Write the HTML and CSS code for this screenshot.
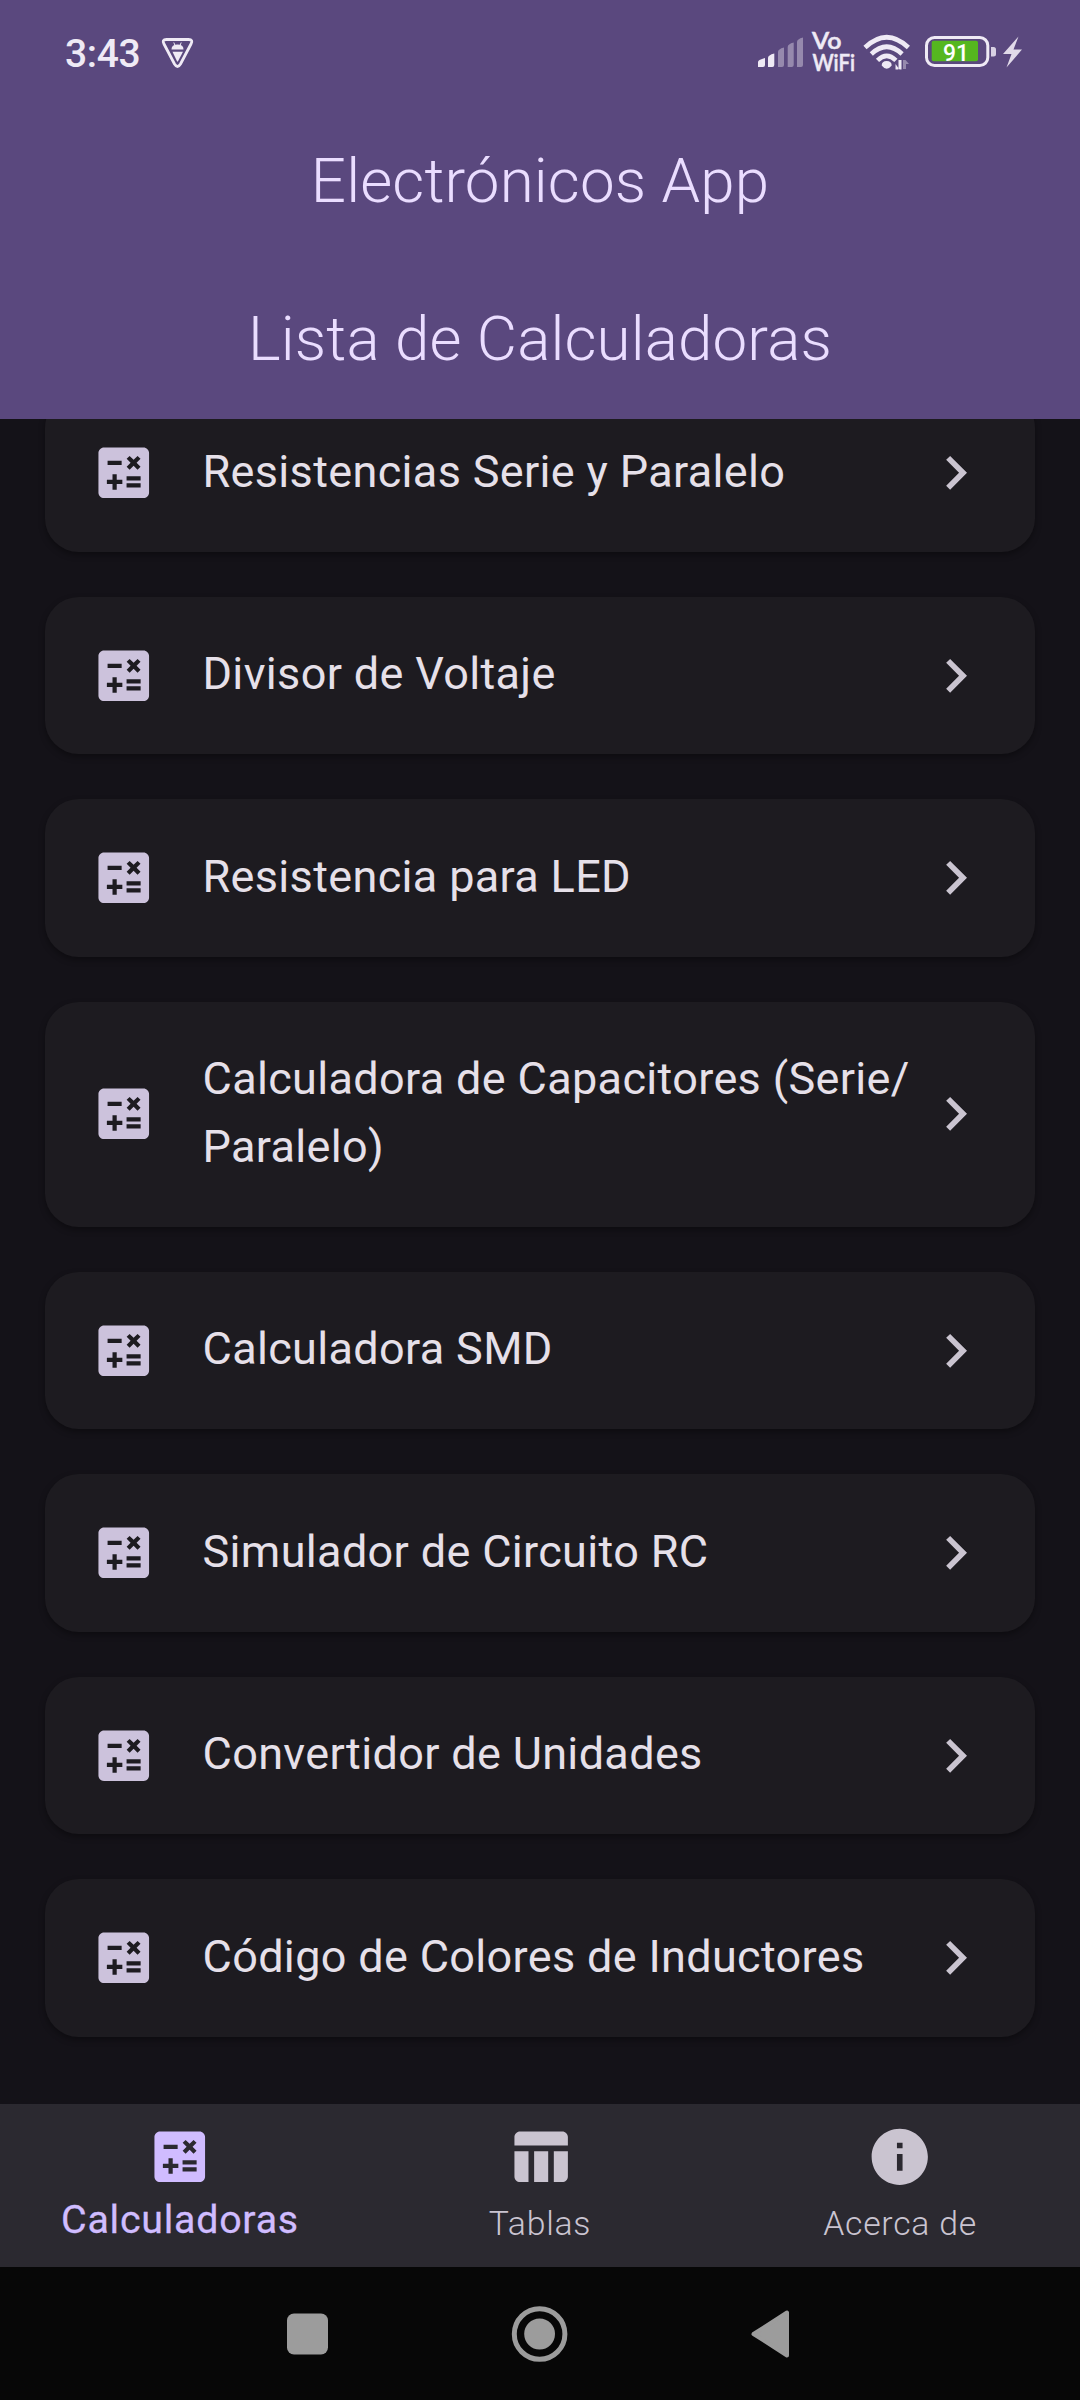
FILE: index.html
```html
<!DOCTYPE html>
<html lang="es">
<head>
<meta charset="utf-8">
<title>Electrónicos App</title>
<link rel="stylesheet" href="styles.css">
</head>
<body>
<svg class="defs" aria-hidden="true">
  <symbol id="calc" viewBox="0 0 24 24"><path d="M19 3H5c-1.1 0-2 .9-2 2v14c0 1.1.9 2 2 2h14c1.1 0 2-.9 2-2V5c0-1.100-.9-2-2-2zM13.030 7.060L14.090 6l1.410 1.410L16.910 6l1.060 1.060-1.410 1.410 1.410 1.410-1.060 1.060L15.500 9.540l-1.410 1.410-1.060-1.060 1.410-1.410zM6.250 7.720h5v1.500h-5zM11.500 16h-2v2H8v-2H6v-1.500h2v-2h1.500v2h2zM18 17.250h-5v-1.500h5zM18 14.750h-5v-1.500h5z"/></symbol>
  <symbol id="chevron" viewBox="0 0 24 24"><path d="M10 6L8.590 7.410 13.170 12l-4.580 4.590L10 18l6-6z"/></symbol>
</svg>
<div class="screen">
  <header class="header">
    <div class="status">
      <span class="time">3:43</span>
      <svg class="bee" width="36" height="32" viewBox="0 0 36 32"><path d="M6.500 2.500h22q5 0 2.500 4.500L20.500 27q-3 5-6 0L4 7Q1.500 2.500 6.500 2.500z" fill="none" stroke="#efeaf5" stroke-width="2.800"/><path d="M11.500 12.500q0-5 6-5t6 5z"/><path d="M12.500 14.800h10.500l-5 9.500q-.5.800-1 0z"/><path d="M13.800 5.500l1.200 3M21.200 5.500l-1.200 3" stroke="#efeaf5" stroke-width="1"/></svg>
      <svg class="tray" width="270" height="50" viewBox="756 26 270 50">
        <path d="M758 67v-5q0-2 7-4v7q0 2-2 2zM768 67V58q0-3 6.300-4.500V65q0 2-2 2z"/>
        <path opacity=".4" d="M778 67V52q0-3 6-4.500V65q0 2-2 2zM787.700 67V47q0-3 6-4.500V65q0 2-2 2zM797 67V42q0-3 6-4.500V65q0 2-2 2z"/>
        <text class="volte" x="812" y="48.500" textLength="29.500" lengthAdjust="spacingAndGlyphs">Vo</text>
        <text class="volte" x="812.500" y="71" textLength="42.500" lengthAdjust="spacingAndGlyphs">WiFi</text>
        <g fill="none" stroke="#efeaf5" stroke-width="4.600"><path d="M865 47.500q21.700-20.500 43.400 0"/><path d="M871.300 54q15.400-14.500 30.800 0"/><path d="M877.500 60.300q9.200-8.800 18.400 0"/></g>
        <path d="M881.700 65.500q0-4.500 5-4.500t5 4.500q-5 6.500-10 0z"/>
        <path d="M898.500 60v9.500h3V60zM895.500 64l4 5.500h-4z"/><path opacity=".4" d="M903 60v9h3v-5h3l-3.500-4z"/>
        <rect x="926.500" y="37.500" width="61.300" height="28" rx="8" fill="none" stroke="#efeaf5" stroke-width="3"/>
        <rect x="931.700" y="40.700" width="46.300" height="20.600" rx="2" fill="#55b71f"/>
        <path opacity=".85" d="M991 47h2.500q2.500 0 2.500 2.500v4.500q0 2.500-2.500 2.500H991z"/>
        <text class="level" x="943" y="61" textLength="26" lengthAdjust="spacingAndGlyphs">91</text>
        <path opacity=".9" d="M1018.500 36.500L1003 54h8.500l-5 13.500L1022 49.500h-8.500z"/>
      </svg>
    </div>
    <h1 class="title">Electrónicos App</h1>
    <h2 class="title">Lista de Calculadoras</h2>
  </header>
  <main class="list">
    <div class="card"><svg class="icon"><use href="#calc"/></svg><span class="label">Resistencias Serie y Paralelo</span><svg class="icon arrow"><use href="#chevron"/></svg></div>
    <div class="card"><svg class="icon"><use href="#calc"/></svg><span class="label">Divisor de Voltaje</span><svg class="icon arrow"><use href="#chevron"/></svg></div>
    <div class="card"><svg class="icon"><use href="#calc"/></svg><span class="label">Resistencia para LED</span><svg class="icon arrow"><use href="#chevron"/></svg></div>
    <div class="card"><svg class="icon"><use href="#calc"/></svg><span class="label">Calculadora de Capacitores (Serie/<br>Paralelo)</span><svg class="icon arrow"><use href="#chevron"/></svg></div>
    <div class="card"><svg class="icon"><use href="#calc"/></svg><span class="label">Calculadora SMD</span><svg class="icon arrow"><use href="#chevron"/></svg></div>
    <div class="card"><svg class="icon"><use href="#calc"/></svg><span class="label">Simulador de Circuito RC</span><svg class="icon arrow"><use href="#chevron"/></svg></div>
    <div class="card"><svg class="icon"><use href="#calc"/></svg><span class="label">Convertidor de Unidades</span><svg class="icon arrow"><use href="#chevron"/></svg></div>
    <div class="card"><svg class="icon"><use href="#calc"/></svg><span class="label">Código de Colores de Inductores</span><svg class="icon arrow"><use href="#chevron"/></svg></div>
  </main>
  <nav class="tabs">
    <div class="tab active"><svg class="icon"><use href="#calc"/></svg><span>Calculadoras</span></div>
    <div class="tab"><svg class="icon" viewBox="0 0 24 24"><path d="M10 10.020h5V21h-5zM17 21h3c1.100 0 2-.9 2-2v-9h-5zM20 3H5c-1.100 0-2 .9-2 2v3h19V5c0-1.100-.9-2-2-2zM3 19c0 1.100.9 2 2 2h3V10H3z"/></svg><span>Tablas</span></div>
    <div class="tab"><svg class="icon" viewBox="0 0 24 24"><path d="M12 2C6.480 2 2 6.480 2 12s4.480 10 10 10 10-4.480 10-10S17.520 2 12 2zm1 15h-2v-6h2zm0-8h-2V7h2z"/></svg><span>Acerca de</span></div>
  </nav>
  <footer class="system">
    <svg width="60" height="60" viewBox="0 0 60 60"><rect x="9" y="9.500" width="41" height="41" rx="7"/></svg>
    <svg width="60" height="60" viewBox="0 0 60 60"><circle cx="29.600" cy="30" r="25.300" fill="none" stroke="#9c9c9c" stroke-width="5"/><circle cx="29.600" cy="30" r="15.400"/></svg>
    <svg width="60" height="60" viewBox="0 0 60 60"><path d="M11.500 30L45 8.500V51.500z" stroke="#9c9c9c" stroke-width="4" stroke-linejoin="round"/></svg>
  </footer>
</div>
</body>
</html>
```
FILE: styles.css
```css
* { box-sizing: border-box; }
body { margin: 0; background: #141218; font-family: Roboto, sans-serif; }
svg { display: block; flex: none; }
.defs { display: none; }
.screen { display: flex; flex-direction: column; width: 1080px; height: 2400px; overflow: hidden; }

.header { flex: none; height: 419px; background: #5a487e; color: #eaddff; }
.status { display: flex; align-items: flex-start; height: 102px; padding: 26px 54px 0 65px; fill: #efeaf5; color: #efeaf5; }
.time { font-size: 39px; font-weight: 500; line-height: 56px; width: 95px; letter-spacing: -.4px; white-space: nowrap; }
.bee { margin-top: 11px; }
.tray { margin-left: auto; }
.volte { font: 600 22px Lato, sans-serif; stroke: #efeaf5; stroke-width: .5px; }
.level { font: 500 24px Roboto, sans-serif; fill: #fff; }
.title { margin: 0; height: 158px; line-height: 158px; font-size: 61.875px; font-weight: 300; letter-spacing: .15px; text-align: center; white-space: nowrap; }

.list { flex: none; height: 1685px; overflow: hidden; display: flex; flex-direction: column; gap: 45px; padding: 0 45px; }
.card { flex: none; display: flex; align-items: center; padding: 45px 45.5px 45px 45px; border-radius: 33.75px; background: #1d1b20; box-shadow: 0 3px 6px rgba(0, 0, 0, .35); }
.card:first-child { margin-top: -25px; }
.icon { width: 67.5px; height: 67.5px; fill: #ccc2dc; }
.label { flex: 1; min-width: 0; margin-left: 45px; font-size: 45px; font-weight: 400; line-height: 67.5px; letter-spacing: .34px; color: #e6e0e9; white-space: nowrap; position: relative; top: -1.2px; }
.arrow { fill: #cac4d0; }

.tabs { flex: none; display: flex; height: 163px; background: #2b2930; }
.tab { flex: 1; display: flex; flex-direction: column; align-items: center; padding-top: 19px; font-size: 33.75px; font-weight: 300; line-height: 48px; letter-spacing: .75px; color: #cac4d0; }
.tab .icon { fill: #cac4d0; margin-bottom: 9px; }
.active { font-size: 39.375px; font-weight: 400; color: #d0bcff; }
.active span { -webkit-text-stroke: .3px #d0bcff; }
.tab.active .icon { fill: #d0bcff; margin-bottom: 5px; }

.system { flex: 1; display: flex; align-items: center; justify-content: center; gap: 172px; background: #070707; fill: #9c9c9c; }
```
